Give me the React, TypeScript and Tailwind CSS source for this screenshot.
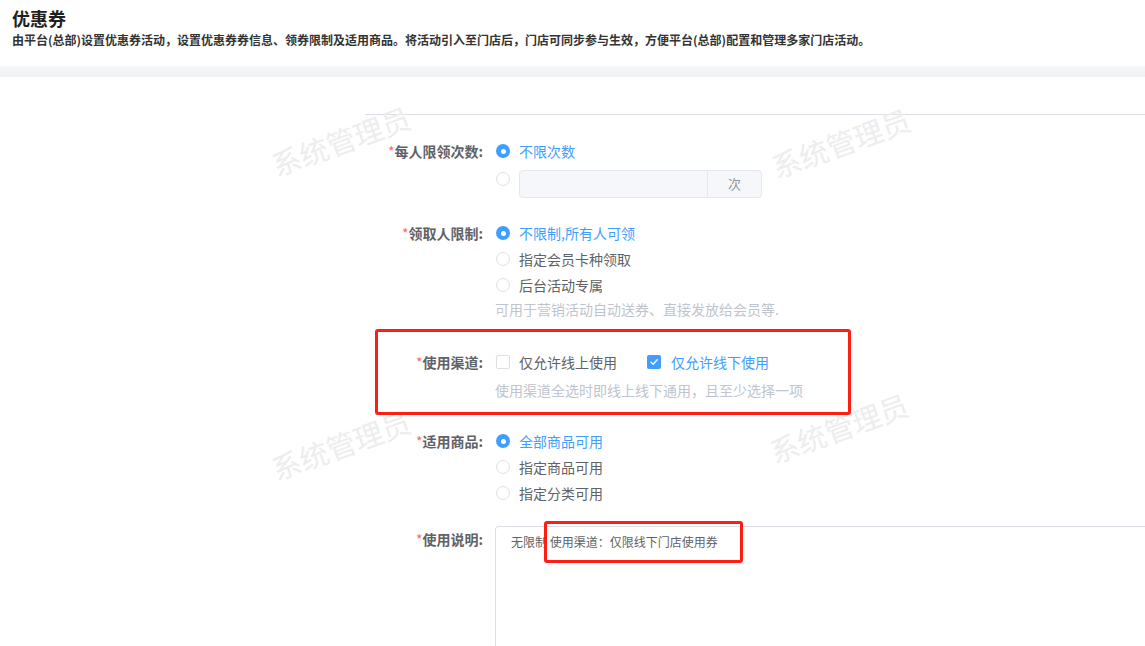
import React from 'react';

const Radio = ({ checked }: { checked?: boolean }) =>
  checked ? (
    <span className="w-[14px] h-[14px] rounded-full bg-[#409eff] flex items-center justify-center shrink-0">
      <span className="w-[5px] h-[5px] rounded-full bg-white" />
    </span>
  ) : (
    <span className="block w-[14px] h-[14px] rounded-full border border-[#dcdfe6] bg-white shrink-0" />
  );

const Checkbox = ({ checked }: { checked?: boolean }) =>
  checked ? (
    <span className="w-[14px] h-[14px] rounded-[2px] bg-[#409eff] flex items-center justify-center shrink-0">
      <svg width="10" height="10" viewBox="0 0 10 10" fill="none">
        <path d="M2 5.2 L4.2 7.3 L8.2 2.8" stroke="white" strokeWidth="1.4" strokeLinecap="round" strokeLinejoin="round" />
      </svg>
    </span>
  ) : (
    <span className="block w-[14px] h-[14px] rounded-[2px] border border-[#dcdfe6] bg-white shrink-0" />
  );

const Option = ({ label, checked }: { label: string; checked?: boolean }) => (
  <div className="flex items-center h-[26px] gap-[9px] pl-px">
    <Radio checked={checked} />
    <span className={checked ? 'text-[#409eff]' : 'text-[#606266]'}>{label}</span>
  </div>
);

const Label = ({ text }: { text: string }) => (
  <div className="w-[118px] shrink-0 text-right leading-[26px] font-bold text-[#606266]">
    <span className="text-[#f56c6c] font-normal">*</span>
    {text}:
  </div>
);

const Hint = ({ text }: { text: string }) => (
  <div className="leading-[22px] text-[#c0c4cc]">{text}</div>
);

const Watermark = ({ x, y }: { x: number; y: number }) => (
  <div
    className="absolute text-[29px] leading-none text-[#ededed] -rotate-[20deg] whitespace-nowrap pointer-events-none"
    style={{ left: x, top: y }}
  >
    系统管理员
  </div>
);

export default function App() {
  return (
    <div className="relative w-[1145px] h-[646px] overflow-hidden bg-white text-[14px] font-['Noto_Sans_CJK_SC','Noto_Sans',sans-serif]">
      <header className="h-[66px] px-3 pt-[7px]">
        <h1 className="text-[18px] leading-[22px] font-bold text-[#1f1f1f]">优惠券</h1>
        <p className="mt-[2px] text-[12px] leading-[18px] font-semibold text-[#333]">
          由平台(总部)设置优惠券活动，设置优惠券券信息、领券限制及适用商品。将活动引入至门店后，门店可同步参与生效，方便平台(总部)配置和管理多家门店活动。
        </p>
      </header>
      <div className="h-[11px] bg-gradient-to-b from-[#f7f8f9] to-[#eff0f2]" />

      <div className="pt-[37px]">
        <div className="ml-[365px] h-px bg-[#dedde6]" />

        <div className="ml-[365px] pt-[23px]">
          <div className="flex">
            <Label text="每人限领次数" />
            <div className="ml-3">
              <Option label="不限次数" checked />
              <div className="flex items-start mt-[6px] gap-[9px] pl-px">
                <span className="flex mt-[2px]"><Radio /></span>
                <div className="flex h-[28px] w-[243px] rounded-[4px] border border-[#e4e7ed] bg-[#f5f7fa] overflow-hidden">
                  <div className="flex-1" />
                  <div className="w-[54px] border-l border-[#e4e7ed] flex items-center justify-center text-[13px] text-[#909399]">次</div>
                </div>
              </div>
            </div>
          </div>

          <div className="flex mt-[22px]">
            <Label text="领取人限制" />
            <div className="ml-3">
              <Option label="不限制,所有人可领" checked />
              <Option label="指定会员卡种领取" />
              <Option label="后台活动专属" />
              <Hint text="可用于营销活动自动送券、直接发放给会员等." />
            </div>
          </div>

          <div className="flex mt-[29px]">
            <Label text="使用渠道" />
            <div className="ml-3">
              <div className="flex items-center h-[26px] pl-px">
                <Checkbox />
                <span className="ml-[9px] text-[#606266]">仅允许线上使用</span>
                <span className="flex ml-[30px]"><Checkbox checked /></span>
                <span className="ml-[10px] text-[#409eff]">仅允许线下使用</span>
              </div>
              <div className="mt-1"><Hint text="使用渠道全选时即线上线下通用，且至少选择一项" /></div>
            </div>
          </div>

          <div className="flex mt-[27px]">
            <Label text="适用商品" />
            <div className="ml-3">
              <Option label="全部商品可用" checked />
              <Option label="指定商品可用" />
              <Option label="指定分类可用" />
            </div>
          </div>

          <div className="flex mt-[20px]">
            <Label text="使用说明" />
            <div className="ml-3 flex-1 h-[140px] rounded-l-[4px] border border-r-0 border-[#dcdfe6] px-[15px] py-[4px] text-[12px] leading-[22px] text-[#606266]">
              无限制 使用渠道：仅限线下门店使用券
            </div>
          </div>
        </div>
      </div>

      <Watermark x={268} y={126} />
      <Watermark x={768} y={128} />
      <Watermark x={268} y={430} />
      <Watermark x={766} y={413} />

      <div className="absolute left-[375px] top-[329px] w-[476px] h-[86px] border-[3px] border-[#ff1e14] rounded-[3px] pointer-events-none" />
      <div className="absolute left-[544px] top-[521px] w-[199px] h-[42px] border-[3px] border-[#ff1e14] rounded-[3px] pointer-events-none" />
    </div>
  );
}
